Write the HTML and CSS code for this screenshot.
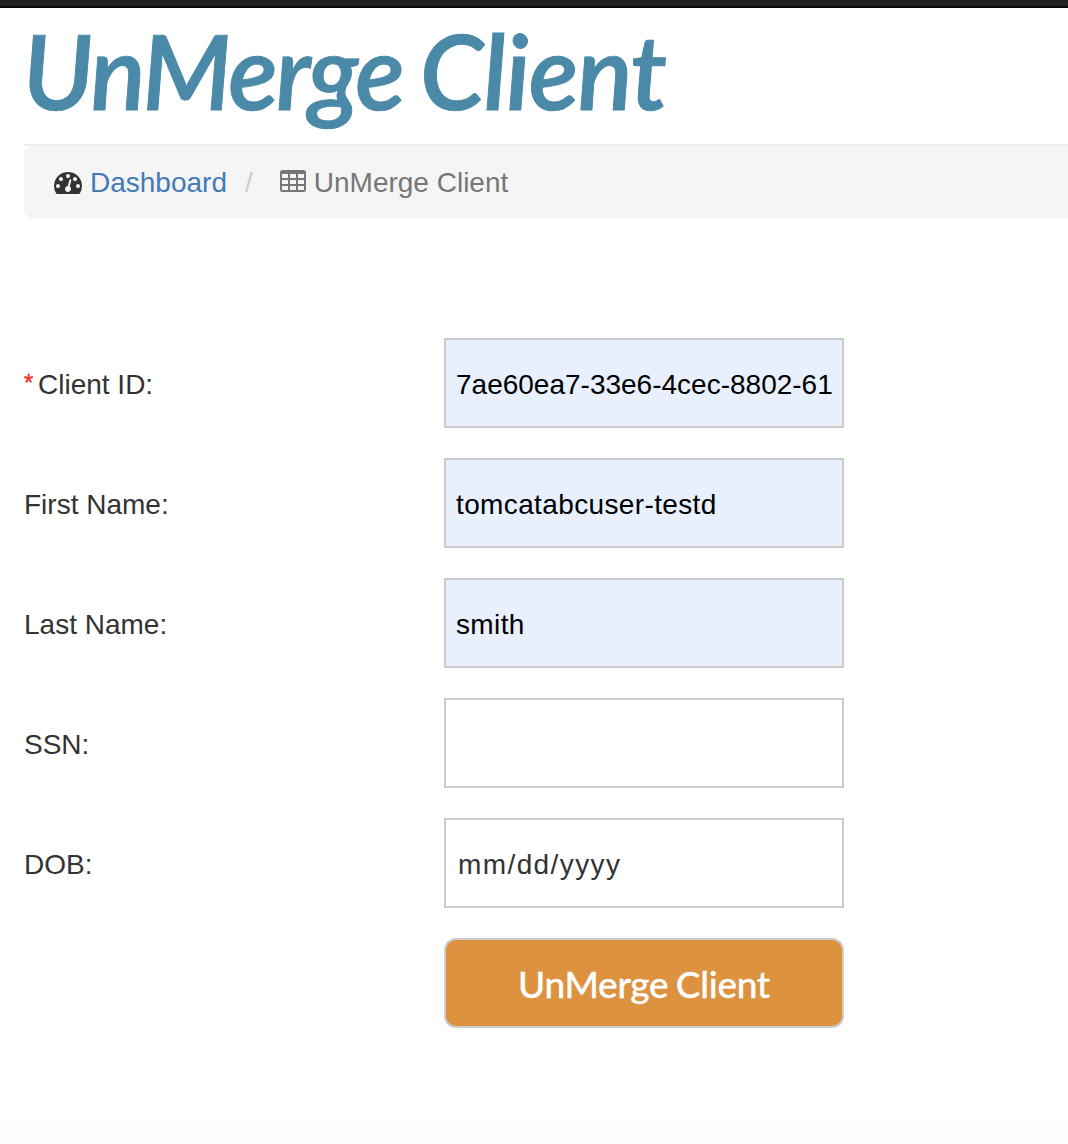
FILE: index.html
```html
<!DOCTYPE html>
<html lang="en">
<head>
<meta charset="utf-8">
<title>UnMerge Client</title>
<link rel="stylesheet" href="styles.css">
</head>
<body>
<div class="topbar"></div>
<main class="page">
  <h1 class="title"><span class="title-text"><span class="title-tight">UnMerge</span> Client</span></h1>
  <nav class="breadcrumb">
    <svg class="icon-dashboard" viewBox="0 0 1792 1792" width="28" height="28"><path fill="currentColor" d="M384 1152q0-53-37.500-90.500t-90.500-37.500-90.500 37.500-37.500 90.500 37.500 90.500 90.500 37.500 90.500-37.500 37.500-90.500zm192-448q0-53-37.500-90.500t-90.500-37.500-90.500 37.500-37.500 90.500 37.500 90.500 90.500 37.500 90.500-37.500 37.500-90.500zm428 481l101-382q6-26-7.500-48.500t-38.500-29.500-48 6.500-30 39.500l-101 382q-60 5-107 43.500t-63 98.500q-20 77 20 146t117 89 146-20 89-117q16-60-6-117t-72-91zm660-33q0-53-37.500-90.500t-90.500-37.500-90.500 37.500-37.500 90.500 37.500 90.500 90.500 37.500 90.500-37.500 37.500-90.500zm-640-640q0-53-37.500-90.500t-90.500-37.500-90.500 37.500-37.500 90.500 37.500 90.500 90.500 37.500 90.500-37.500 37.500-90.500zm448 192q0-53-37.500-90.500t-90.500-37.500-90.500 37.500-37.500 90.500 37.500 90.500 90.500 37.500 90.500-37.500 37.500-90.500zm320 448q0 261-141 483-19 29-54 29h-1402q-35 0-54-29-141-221-141-483 0-182 71-348t191-286 286-191 348-71 348 71 286 191 191 286 71 348z"/></svg>
    <a class="crumb-link">Dashboard</a>
    <span class="crumb-separator">/</span>
    <svg class="icon-table" viewBox="0 0 26 22" width="26" height="22"><path fill="currentColor" fill-rule="evenodd" d="M2.500 0h21a2.500 2.500 0 0 1 2.500 2.500v17a2.500 2.500 0 0 1-2.500 2.500h-21a2.500 2.500 0 0 1-2.500-2.500v-17a2.500 2.500 0 0 1 2.500-2.500zM2 4v4h6v-4zM10 4v4h6v-4zM18 4v4h6v-4zM2 10v4h6v-4zM10 10v4h6v-4zM18 10v4h6v-4zM2 16v4h6v-4zM10 16v4h6v-4zM18 16v4h6v-4z"/></svg>
    <span class="crumb-current">UnMerge Client</span>
  </nav>
  <form class="client-form">
    <label class="label" for="client-id"><span class="required">*</span>Client ID:</label>
    <input class="field filled" id="client-id" type="text" value="7ae60ea7-33e6-4cec-8802-61">
    <label class="label" for="first-name">First Name:</label>
    <input class="field filled name" id="first-name" type="text" value="tomcatabcuser-testd">
    <label class="label" for="last-name">Last Name:</label>
    <input class="field filled name" id="last-name" type="text" value="smith">
    <label class="label" for="ssn">SSN:</label>
    <input class="field" id="ssn" type="text">
    <label class="label" for="dob">DOB:</label>
    <input class="field date" id="dob" type="text" value="mm/dd/yyyy">
    <button class="submit" type="button">UnMerge Client</button>
  </form>
</main>
<footer class="footer"></footer>
</body>
</html>
```
FILE: styles.css
```css
* {
  box-sizing: border-box;
}

body {
  display: flex;
  flex-direction: column;
  height: 1144px;
  margin: 0;
  overflow: hidden;
  background: #fff;
  color: #333;
  font: 28px/40px "Liberation Sans", Arial, sans-serif;
}

.topbar {
  flex: none;
  height: 8px;
  background: #222;
  border-bottom: 2px solid #080808;
}

.page {
  flex: 1;
  padding-left: 24px;
}

.title {
  height: 138px;
  margin: 0;
  border-bottom: 2px solid #eee;
  color: #4b89a8;
  font: italic 600 104px/123px Lato, sans-serif;
  letter-spacing: -1.7px;
  word-spacing: -4px;
  white-space: nowrap;
  -webkit-text-stroke: 0.9px #4b89a8;
}

.title-text {
  display: inline-block;
  transform: skewX(2.5deg);
  transform-origin: 0 82%;
}

.title-tight {
  letter-spacing: -3px;
}

.breadcrumb {
  display: flex;
  align-items: center;
  height: 72px;
  padding-left: 30px;
  background: #f5f5f5;
  border-radius: 8px 0 0 8px;
  white-space: nowrap;
}

.crumb-link {
  padding-top: 2px;
  margin-left: 8px;
  color: #447ab7;
}

.crumb-separator {
  padding-top: 2px;
  margin: 0 27px 0 18px;
  color: #ccc;
}

.icon-table {
  margin-bottom: 2px;
  color: #777;
}

.crumb-current {
  padding-top: 2px;
  margin-left: 8px;
  color: #777;
}

.client-form {
  display: grid;
  grid-template-columns: 420px 400px;
  grid-auto-rows: 90px;
  row-gap: 30px;
  align-items: center;
  margin-top: 120px;
}

.label {
  padding-top: 4px;
}

.required {
  display: inline-block;
  width: 14px;
  color: #ee3124;
  font-size: 24px;
  line-height: 28px;
  vertical-align: 3px;
  -webkit-text-stroke: 0.4px #ee3124;
}

.field {
  width: 400px;
  height: 90px;
  margin: 0;
  padding: 4px 10px 0;
  border: 2px solid #ccc;
  border-radius: 0;
  background: #fff;
  color: #000;
  font: inherit;
}

.filled {
  background: #e8effd;
}

.name {
  letter-spacing: 0.37px;
}

.date {
  padding-left: 12px;
  color: #333;
  letter-spacing: 1.4px;
}

.submit {
  grid-column: 2;
  height: 90px;
  margin: 0;
  padding: 2px 0 0;
  border: 2px solid #ccc;
  border-radius: 12px;
  background: #dc923f;
  color: #fff;
  font: 500 37px/44px Lato, sans-serif;
  letter-spacing: -0.3px;
  word-spacing: -1.5px;
  -webkit-text-stroke: 0.3px #fff;
}

.footer {
  flex: none;
  height: 21px;
  background: #fdfdfd;
}
```
